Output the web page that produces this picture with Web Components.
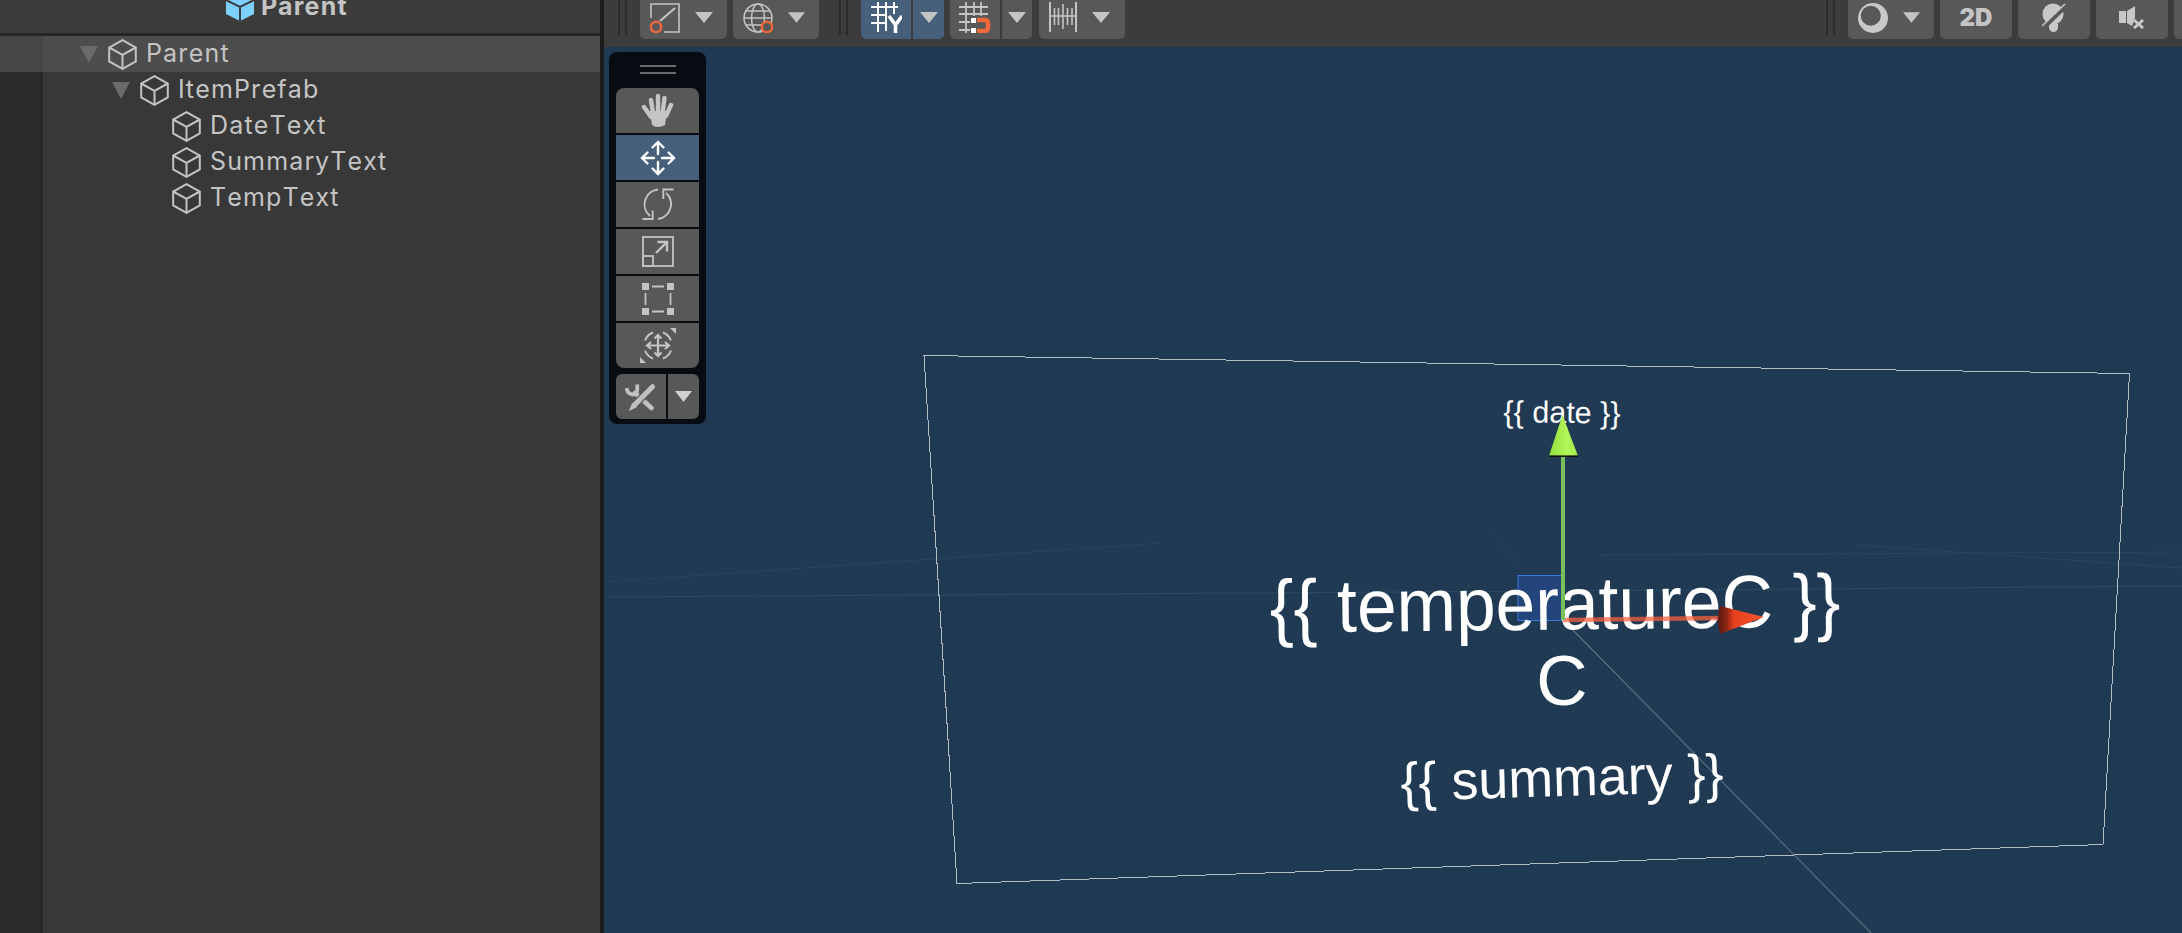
<!DOCTYPE html>
<html lang="en">
<head>
<meta charset="UTF-8" />
<title>Scene</title>
<style>
    html, body { margin: 0; height: 100%; overflow: hidden; background: #1b1b1b; }
    body { font-family: Inter, "Liberation Sans", sans-serif; }
</style>
</head>
<body>
<unity-editor>
    <hierarchy-panel slot="left" title-text="Parent">
        <hierarchy-row depth="0" expanded selected>Parent</hierarchy-row>
        <hierarchy-row depth="1" expanded>ItemPrefab</hierarchy-row>
        <hierarchy-row depth="2">DateText</hierarchy-row>
        <hierarchy-row depth="2">SummaryText</hierarchy-row>
        <hierarchy-row depth="2">TempText</hierarchy-row>
    </hierarchy-panel>
    <scene-view slot="right">
        <scene-toolbar slot="toolbar">
            <bar-sep></bar-sep>
            <bar-button icon="pivot" arrow w="87" style="margin-right:6px"></bar-button>
            <bar-button icon="globe" arrow w="86"></bar-button>
            <bar-sep style="margin-left:20px"></bar-sep>
            <bar-button icon="gridy" active join="left" w="50" style="margin-right:2px"></bar-button>
            <bar-button active join="right" arrow w="31" style="margin-right:6px"></bar-button>
            <bar-button icon="snap" join="left" w="50" style="margin-right:2px"></bar-button>
            <bar-button join="right" arrow w="30" style="margin-right:7px"></bar-button>
            <bar-button icon="ruler" arrow w="86"></bar-button>
            <span style="flex:1"></span>
            <bar-sep></bar-sep>
            <bar-button icon="shade" arrow w="86" style="margin-right:6px"></bar-button>
            <bar-button w="72" style="margin-right:6px"><b>2D</b></bar-button>
            <bar-button icon="light" w="72" style="margin-right:6px"></bar-button>
            <bar-button icon="audio" w="72" style="margin-right:6px"></bar-button>
            <bar-button w="72"></bar-button>
        </scene-toolbar>
        <tool-palette></tool-palette>
        <scene-grid></scene-grid>
        <scene-label cx="1561.5" cy="412" size="30.5" rot="0.6">{{ date }}</scene-label>
        <scene-label cx="1554.5" cy="604" size="71.3" rot="-0.6" sy="1.05">{{ temperatureC }}</scene-label>
        <scene-label cx="1562" cy="680" size="71" rot="0">C</scene-label>
        <scene-label cx="1562" cy="778" size="53.8" rot="-1.6">{{ summary }}</scene-label>
        <move-gizmo></move-gizmo>
    </scene-view>
</unity-editor>

<script>
    // icons are all inline, keyed by name
    const STROKE = 'fill="none" stroke="currentColor"';
    const ICONS = {
        pivot: `<svg width="30" height="30" viewBox="0 0 30 30" ${STROKE} stroke-width="1.6">
            <path d="M1 15V1H29V29H14" /><path d="M10 18L25 5" stroke-width="2.2" />
            <circle cx="6" cy="24" r="5.2" stroke="#f0683a" stroke-width="2.4" /></svg>`,
        globe: `<svg width="30" height="30" viewBox="0 0 30 30" ${STROKE} stroke-width="1.5">
            <circle cx="15" cy="15" r="14" /><ellipse cx="15" cy="15" rx="6.5" ry="14" />
            <path d="M1 15H29M3 8H27M3 22H27" />
            <circle cx="24" cy="24" r="5.2" fill="#585858" stroke="#f0683a" stroke-width="2.4" /></svg>`,
        gridy: `<svg width="31" height="31" viewBox="0 0 31 31" ${STROKE} stroke-width="2" color="#fff">
            <path d="M7 0V30M15 0V29M23 0V12M0 5H27M0 13H16M0 21H16" />
            <path d="M18 14L24.5 23L31 14M24.5 23V31" stroke-width="3.6" /></svg>`,
        snap: `<svg width="32" height="31" viewBox="0 0 32 31" ${STROKE} stroke-width="1.8">
            <path d="M7 0V31M15 0V14M22 0V14M0 5H29M0 12H29M0 20H11M0 28H11" />
            <rect x="12" y="16" width="5" height="5" fill="#fff" stroke="none" />
            <rect x="12" y="26" width="5" height="5" fill="#fff" stroke="none" />
            <path d="M18 18H25Q29 18 29 21V26Q29 29 25 29H18" stroke="#f0683a" stroke-width="4.5" /></svg>`,
        ruler: `<svg width="28" height="31" viewBox="0 0 28 31" ${STROKE} stroke-width="1.6">
            <path d="M1 0V30M27 0V30" stroke-width="2" />
            <path d="M1 14H27M5.5 6V23M9.5 6V23M14 2V27M18.5 6V23M23 6V23" /></svg>`,
        shade: `<svg width="30" height="30" viewBox="0 0 30 30">
            <circle cx="15" cy="15" r="15" fill="#c8c8c8" />
            <circle cx="12.8" cy="12.8" r="10" fill="#585858" /></svg>`,
        light: `<svg width="24" height="30" viewBox="0 0 24 30">
            <circle cx="11" cy="11" r="10.5" fill="#c8c8c8" />
            <path d="M7 21H16V25Q15 29 11.5 29Q8 29 7 25Z" fill="#c8c8c8" />
            <path d="M1 25L24 3" stroke="#585858" stroke-width="4.5" />
            <path d="M0 23L23 1" stroke="#c8c8c8" stroke-width="1.6" /></svg>`,
        audio: `<svg width="26" height="23" viewBox="0 0 26 23">
            <path d="M0 5H7V17H0Z" fill="#c8c8c8" />
            <path d="M8 5L16 0V12L13 20L8 17Z" fill="#c8c8c8" />
            <path d="M15 14L24 22M24 14L15 22" stroke="#c8c8c8" stroke-width="3" fill="none" /></svg>`,
        hand: `<svg width="33" height="35" viewBox="0 0 33 35" fill="currentColor" stroke="currentColor" stroke-linecap="round">
            <path d="M9 18H26L24 32Q16 36 11 32Z" stroke="none" />
            <g stroke-width="4.4" fill="none"><path d="M3 14L10 24M10 7L12 20M17 3V20M23.5 5L21.5 20M30 12L25 23" /></g></svg>`,
        move: `<svg width="36" height="36" viewBox="0 0 36 36" ${STROKE} stroke-width="2.4" color="#fff" stroke-linecap="round">
            <path d="M18 2V14M12.5 7.5L18 2L23.5 7.5M18 22V34M12.5 28.5L18 34L23.5 28.5M2 18H14M7.5 12.5L2 18L7.5 23.5M22 18H34M28.5 12.5L34 18L28.5 23.5" /></svg>`,
        rotate: `<svg width="32" height="33" viewBox="0 0 32 33" ${STROKE} stroke-width="1.9">
            <path d="M16 1.5A15 15 0 0 0 8 28" /><path d="M0.5 31H10.7V22.5" />
            <path d="M24 5A15 15 0 0 1 16 31" /><path d="M31.5 1.5H21.3V11" /></svg>`,
        scale: `<svg width="32" height="31" viewBox="0 0 32 31" ${STROKE} stroke-width="1.8">
            <rect x="1" y="1" width="30" height="29" /><rect x="1" y="20" width="10" height="10" />
            <path d="M14 17L25 6" stroke-width="2.4" /><path d="M15.5 6H25V15.5" stroke-width="2.4" /></svg>`,
        rect: `<svg width="32" height="32" viewBox="0 0 32 32" fill="currentColor" stroke="currentColor">
            <rect x="0" y="0" width="7" height="7" stroke="none" /><rect x="25" y="0" width="7" height="7" stroke="none" />
            <rect x="0" y="25" width="7" height="7" stroke="none" /><rect x="25" y="25" width="7" height="7" stroke="none" />
            <path d="M10 3.5H22M10 28.5H22M3.5 10V22M28.5 10V22" stroke-width="1.8" /></svg>`,
        transform: `<svg width="36" height="35" viewBox="0 0 36 35" ${STROKE} stroke-width="2">
            <path d="M5 12.5A14 14 0 0 1 13 4.5M23 4.5A14 14 0 0 1 31 12.5M31 22.5A14 14 0 0 1 23 30.5M13 30.5A14 14 0 0 1 5 22.5" />
            <path d="M18 7V28M7 17.5H29M14.5 10.5L18 7L21.5 10.5M14.5 24.5L18 28L21.5 24.5M11 14L7 17.5L11 21M25 14L29 17.5L25 21" stroke-width="2.2" />
            <path d="M30 0H36V6Z M0 29L6 35H0Z" fill="currentColor" stroke="none" /></svg>`,
        tools: `<svg width="32" height="30" viewBox="0 0 32 30" fill="none" stroke="#c0c0c0">
            <path d="M1.5 6Q2.5 12 8 12.5Q13.5 12 12 2.5" stroke-width="3.8" />
            <path d="M10 11L26.5 26" stroke-width="4.6" stroke-linecap="round" />
            <path d="M27.5 4.7L9.5 23" stroke="#585858" stroke-width="7.5" />
            <path d="M27.5 4.7L9.5 23" stroke-width="5" stroke-linecap="round" />
            <path d="M7.2 20.8L11.8 25.2L4 29Z" fill="#c0c0c0" stroke="none" /></svg>`
    };

    class UnityEditor extends HTMLElement {
        constructor() {
            super();
            this.attachShadow({ mode: 'open' });
            this.shadowRoot.innerHTML = `
                <style>
                    :host { display: grid; grid-template-columns: 600px 1fr; column-gap: 4px; height: 100vh; background: #1c1c1c; }
                </style>
                <slot name="left"></slot>
                <slot name="right"></slot>`;
        }
    }

    class HierarchyPanel extends HTMLElement {
        constructor() {
            super();
            this.attachShadow({ mode: 'open' });
            this.shadowRoot.innerHTML = `
                <style>
                    :host { display: flex; flex-direction: column; min-width: 0; background: #383838; overflow: hidden; }
                    .head {
                        height: 33px; flex: none; background: #3c3c3c; border-bottom: 3px solid #252525;
                        display: flex; align-items: flex-start; gap: 6px; padding-left: 225px; overflow: hidden;
                        color: #c4c4c4; font: 700 25px/33px Inter, "Liberation Sans", sans-serif; letter-spacing: 1.2px;
                    }
                    .head span { margin-top: -10px; }
                    .head svg { flex: none; margin-top: -8px; }
                    .tree { flex: 1; background: linear-gradient(to right, #2a2a2a 43px, #383838 43px); }
                </style>
                <div class="head">
                    <svg width="30" height="30" viewBox="0 0 30 30">
                        <path d="M15 1L29 8V22L15 29L1 22V8Z" fill="#7bd2ff" />
                        <path d="M1 8L15 15L29 8M15 15V29" fill="none" stroke="#3c3c3c" stroke-width="2" />
                    </svg>
                    <span id="title"></span>
                </div>
                <div class="tree"><slot></slot></div>`;
        }
        connectedCallback() {
            this.shadowRoot.getElementById('title').textContent = this.getAttribute('title-text');
        }
    }

    class HierarchyRow extends HTMLElement {
        constructor() {
            super();
            this.attachShadow({ mode: 'open' });
            this.shadowRoot.innerHTML = `
                <style>
                    :host {
                        display: flex; align-items: center; height: 36px; box-sizing: border-box;
                        padding-left: calc(80px + var(--depth, 0) * 32px);
                        color: #c4c4c4; font: 400 25px/36px Inter, "Liberation Sans", sans-serif;
                        font-kerning: none; letter-spacing: 1.15px;
                    }
                    :host([selected]) { background: linear-gradient(to right, #464646 43px, #4d4d4d 43px); }
                    .arrow { width: 28px; flex: none; display: flex; }
                    .arrow svg { visibility: hidden; }
                    :host([expanded]) .arrow svg { visibility: visible; }
                    .cube { flex: none; margin-right: 9px; }
                    .txt { margin-top: -3px; }
                </style>
                <span class="arrow">
                    <svg width="18" height="17" viewBox="0 0 18 17"><path d="M0 0H18L9 17Z" fill="#6b6b6b" /></svg>
                </span>
                <svg class="cube" width="29" height="31" viewBox="0 0 29 31" fill="none" stroke="#c4c4c4" stroke-width="2">
                    <path d="M14.5 1.2L27.8 8.5V22.5L14.5 29.8L1.2 22.5V8.5Z" />
                    <path d="M1.2 8.5L14.5 15.8L27.8 8.5M14.5 15.8V29.8" />
                </svg>
                <span class="txt"><slot></slot></span>`;
        }
        connectedCallback() {
            this.style.setProperty('--depth', this.getAttribute('depth') || 0);
        }
    }

    class SceneView extends HTMLElement {
        constructor() {
            super();
            this.attachShadow({ mode: 'open' });
            this.shadowRoot.innerHTML = `
                <style>
                    :host { display: flex; flex-direction: column; min-width: 0; background: #3c3c3c; }
                    .canvas { flex: 1; position: relative; background: #203a54; overflow: hidden; }
                </style>
                <slot name="toolbar"></slot>
                <div class="canvas"><slot></slot></div>`;
        }
    }

    class SceneToolbar extends HTMLElement {
        constructor() {
            super();
            this.attachShadow({ mode: 'open' });
            this.shadowRoot.innerHTML = `
                <style>
                    :host { display: flex; align-items: flex-start; height: 47px; flex: none; background: #3c3c3c; overflow: hidden; margin-right: -64px; }
                </style>
                <slot></slot>`;
        }
    }

    class BarSep extends HTMLElement {
        constructor() {
            super();
            this.attachShadow({ mode: 'open' });
            this.shadowRoot.innerHTML = `
                <style>
                    :host {
                        display: block; width: 9px; height: 35px; margin: 0 13px 0 14px; flex: none;
                        border-left: 2px solid #2b2b2b; border-right: 2px solid #2b2b2b; box-sizing: border-box;
                    }
                </style>`;
        }
    }

    class BarButton extends HTMLElement {
        constructor() {
            super();
            this.attachShadow({ mode: 'open' });
            this.shadowRoot.innerHTML = `
                <style>
                    :host {
                        display: flex; align-items: center; justify-content: center; gap: 15px;
                        box-sizing: border-box; height: 39px; width: var(--w, auto); flex: none;
                        background: #585858; border-radius: 0 0 5px 5px; color: #c4c4c4;
                        font: 700 24px/1 Inter, "Liberation Sans", sans-serif; padding-bottom: 4px;
                    }
                    :host([active]) { background: #46607c; color: #fff; }
                    :host([join="left"]) { border-bottom-right-radius: 0; }
                    :host([join="right"]) { border-bottom-left-radius: 0; }
                    :host([arrow][icon]) { padding-left: 10px; padding-right: 14px; justify-content: flex-start; }
                    #ic { display: flex; }
                    svg { display: block; }
                </style>
                <span id="ic"></span><slot></slot>
                <svg id="ar" width="18" height="11" viewBox="0 0 18 11"><path d="M0 0H18L9 11Z" fill="#c4c4c4" /></svg>`;
        }
        connectedCallback() {
            const icon = this.getAttribute('icon');
            const ic = this.shadowRoot.getElementById('ic');
            if (icon) ic.innerHTML = ICONS[icon];
            else ic.remove();
            if (!this.hasAttribute('arrow')) this.shadowRoot.getElementById('ar').remove();
            if (this.hasAttribute('w')) this.style.setProperty('--w', this.getAttribute('w') + 'px');
        }
    }

    class ToolPalette extends HTMLElement {
        constructor() {
            super();
            this.attachShadow({ mode: 'open' });
            const names = ['hand', 'move', 'rotate', 'scale', 'rect', 'transform'];
            this.shadowRoot.innerHTML = `
                <style>
                    :host {
                        position: absolute; left: 5px; top: 5px; width: 97px; height: 372px; box-sizing: border-box;
                        display: flex; flex-direction: column; padding: 0 7px; background: #070c12; border-radius: 8px; z-index: 5;
                    }
                    .grip { height: 36px; flex: none; display: flex; flex-direction: column; justify-content: flex-start; align-items: center; gap: 5px; padding-top: 13px; box-sizing: border-box; }
                    .grip i { width: 36px; height: 2px; background: #6a6a6a; display: block; }
                    .stack { display: flex; flex-direction: column; gap: 2px; }
                    .t {
                        height: 45px; background: #585858; color: #c4c4c4; display: flex;
                        align-items: center; justify-content: center;
                    }
                    .t:first-child { border-radius: 8px 8px 0 0; }
                    .t:last-child { border-radius: 0 0 8px 8px; }
                    .t.on { background: #46607c; color: #fff; }
                    .extra { display: flex; gap: 2px; height: 45px; margin-top: 6px; }
                    .extra div { background: #585858; color: #c4c4c4; display: flex; align-items: center; justify-content: center; }
                    .extra .a { width: 50px; border-radius: 6px 0 0 6px; }
                    .extra .b { width: 31px; border-radius: 0 6px 6px 0; }
                </style>
                <div class="grip"><i></i><i></i></div>
                <div class="stack">
                    ${names.map(n => `<div class="t ${n === 'move' ? 'on' : ''}">${ICONS[n]}</div>`).join('')}
                </div>
                <div class="extra">
                    <div class="a">${ICONS.tools}</div>
                    <div class="b"><svg width="17" height="11" viewBox="0 0 17 11"><path d="M0 0H17L8.5 11Z" fill="#d0d0d0" /></svg></div>
                </div>`;
        }
    }

    // screen coordinates are used directly: the canvas starts at 604,47
    class SceneGrid extends HTMLElement {
        constructor() {
            super();
            this.attachShadow({ mode: 'open' });
            this.shadowRoot.innerHTML = `
                <style>
                    :host { position: absolute; inset: 0; display: block; }
                    svg { display: block; width: 100%; height: 100%; }
                </style>
                <svg viewBox="604 47 1578 886" fill="none">
                    <g stroke="#2c4862" stroke-width="1.2">
                        <path d="M604 597L1563 591L2182 586" />
                        <path d="M604 582L1162 543" opacity=".6" />
                        <path d="M1600 555L2182 552" opacity=".7" />
                        <path d="M1858 545L2182 568" opacity=".7" />
                    </g>
                    <path d="M1490 530L1563 620" stroke="#2a4560" stroke-width="1" />
                    <path d="M1563 620L1871 933" stroke="#5e7180" stroke-width="1.1" />
                    <path d="M924 355.5L2129.5 373.5L2103 844.5L957 883.5Z" stroke="#b4bcc5" stroke-width="1" shape-rendering="crispEdges" />
                    <rect x="1518" y="575.5" width="45" height="45" fill="#24447c" stroke="#3a78e0" stroke-width="1" />
                </svg>`;
        }
    }

    class SceneLabel extends HTMLElement {
        constructor() {
            super();
            this.attachShadow({ mode: 'open' });
            this.shadowRoot.innerHTML = `
                <style>
                    :host {
                        position: absolute; white-space: nowrap; color: #fff; line-height: 1;
                        font-family: "Liberation Sans", Arial, sans-serif;
                        transform: translate(-50%, -50%) rotate(var(--rot, 0deg)) scaleY(var(--sy, 1));
                    }
                </style>
                <slot></slot>`;
        }
        connectedCallback() {
            this.style.left = (this.getAttribute('cx') - 604) + 'px';
            this.style.top = (this.getAttribute('cy') - 47) + 'px';
            this.style.fontSize = this.getAttribute('size') + 'px';
            this.style.setProperty('--rot', this.getAttribute('rot') + 'deg');
            if (this.hasAttribute('sy')) this.style.setProperty('--sy', this.getAttribute('sy'));
        }
    }

    class MoveGizmo extends HTMLElement {
        constructor() {
            super();
            this.attachShadow({ mode: 'open' });
            this.shadowRoot.innerHTML = `
                <style>
                    :host { position: absolute; inset: 0; display: block; }
                    svg { display: block; width: 100%; height: 100%; }
                </style>
                <svg viewBox="604 47 1578 886">
                    <defs>
                        <linearGradient id="g" x1="0" x2="1" y1="0" y2="0">
                            <stop offset="0" stop-color="#8fdc3c" /><stop offset=".6" stop-color="#b4f75a" /><stop offset="1" stop-color="#9fe84a" />
                        </linearGradient>
                        <linearGradient id="r" x1="0" x2="1" y1="0" y2="0">
                            <stop offset="0" stop-color="#5a1710" /><stop offset=".18" stop-color="#8a2515" /><stop offset=".35" stop-color="#e8401f" /><stop offset="1" stop-color="#f4532e" />
                        </linearGradient>
                    </defs>
                    <path d="M1563 620L1722 618" stroke="#ff5f3c" stroke-opacity=".72" stroke-width="4.5" fill="none" />
                    <path d="M1563 457V620" stroke="#7ac05a" stroke-width="4" fill="none" />
                    <path d="M1562.5 415L1578 456H1549Z" fill="url(#g)" />
                    <path d="M1549 456.2H1578" stroke="#0a1208" stroke-width="1.6" />
                    <path d="M1720 606Q1716 620 1720 634L1764 617Z" fill="url(#r)" />
                </svg>`;
        }
    }

    customElements.define('unity-editor', UnityEditor);
    customElements.define('hierarchy-panel', HierarchyPanel);
    customElements.define('hierarchy-row', HierarchyRow);
    customElements.define('scene-view', SceneView);
    customElements.define('scene-toolbar', SceneToolbar);
    customElements.define('bar-sep', BarSep);
    customElements.define('bar-button', BarButton);
    customElements.define('tool-palette', ToolPalette);
    customElements.define('scene-grid', SceneGrid);
    customElements.define('scene-label', SceneLabel);
    customElements.define('move-gizmo', MoveGizmo);
</script>
</body>
</html>
